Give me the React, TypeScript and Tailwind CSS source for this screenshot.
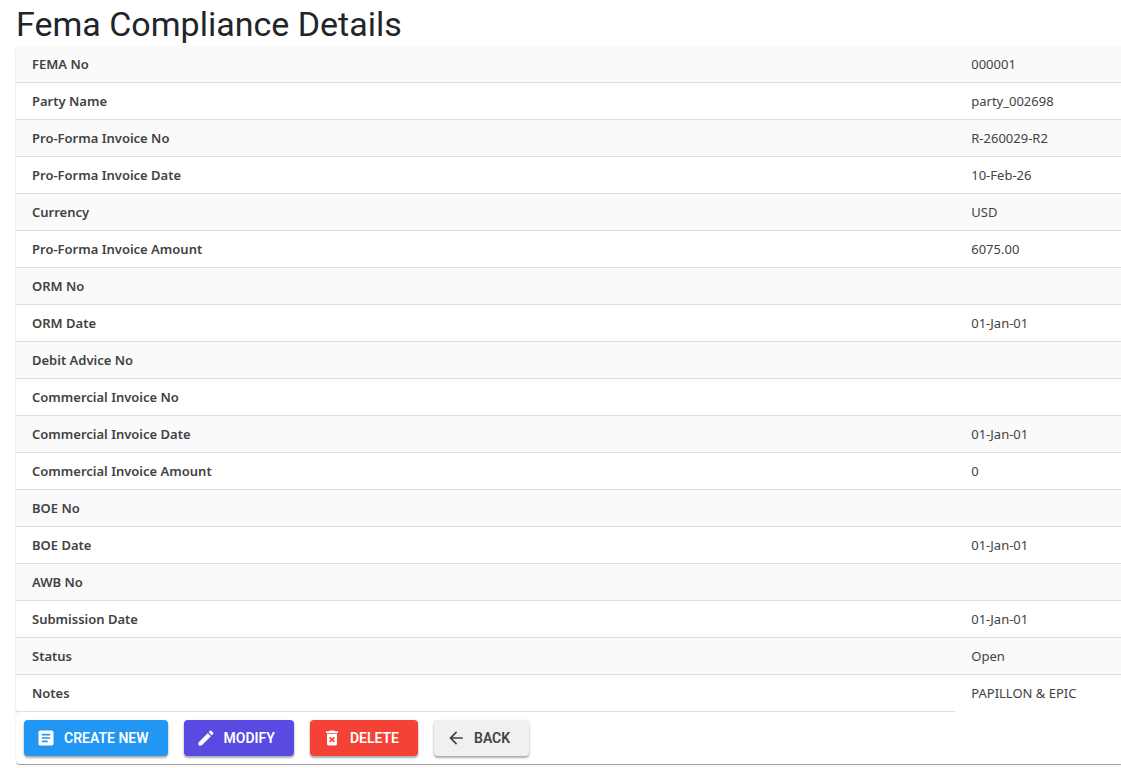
import { MdArrowBack, MdArticle, MdCreate, MdDeleteForever } from "react-icons/md";

const rows = [
  { label: "FEMA No", value: "000001" },
  { label: "Party Name", value: "party_002698" },
  { label: "Pro-Forma Invoice No", value: "R-260029-R2" },
  { label: "Pro-Forma Invoice Date", value: "10-Feb-26" },
  { label: "Currency", value: "USD" },
  { label: "Pro-Forma Invoice Amount", value: "6075.00" },
  { label: "ORM No", value: "" },
  { label: "ORM Date", value: "01-Jan-01" },
  { label: "Debit Advice No", value: "" },
  { label: "Commercial Invoice No", value: "" },
  { label: "Commercial Invoice Date", value: "01-Jan-01" },
  { label: "Commercial Invoice Amount", value: "0" },
  { label: "BOE No", value: "" },
  { label: "BOE Date", value: "01-Jan-01" },
  { label: "AWB No", value: "" },
  { label: "Submission Date", value: "01-Jan-01" },
  { label: "Status", value: "Open" },
  { label: "Notes", value: "PAPILLON & EPIC" },
];

const actions = [
  { label: "CREATE NEW", icon: MdArticle, color: "bg-[#2196f3] text-white" },
  { label: "MODIFY", icon: MdCreate, color: "bg-[#594ae2] text-white" },
  { label: "DELETE", icon: MdDeleteForever, color: "bg-[#f44336] text-white" },
  { label: "BACK", icon: MdArrowBack, color: "bg-[#f0f0f0] text-[#424242]" },
];

export default function App() {
  return (
    <main className="overflow-hidden bg-white pb-3 pl-4 font-['Noto_Sans',sans-serif] text-[#424242]">
      <h1 className="pt-1 pb-[2px] font-['Roboto',sans-serif] text-[34px] leading-10 text-[#212529]">
        Fema Compliance Details
      </h1>

      <div className="rounded-l shadow-[0_1px_2px_rgba(0,0,0,0.25)]">
        <table className="w-full table-fixed border-separate border-spacing-0 text-[13px] leading-5">
          <colgroup>
            <col className="w-[85%]" />
            <col />
          </colgroup>
          <tbody>
            {rows.map((row) => (
              <tr key={row.label} className="group odd:bg-[#fafafa]">
                <th
                  scope="row"
                  className="h-[37px] border-b border-[#e0e0e0] px-4 text-left font-semibold group-first:rounded-tl"
                >
                  {row.label}
                </th>
                <td className="border-b border-[#e0e0e0] px-4 whitespace-nowrap group-last:border-transparent">
                  {row.value}
                </td>
              </tr>
            ))}
          </tbody>
        </table>
      </div>

      {/* Toolbar */}
      <div className="flex gap-4 rounded-l bg-white p-2 shadow-[0_1px_1px_rgba(0,0,0,0.4)]">
        {actions.map(({ label, icon: Icon, color }) => (
          <button
            key={label}
            type="button"
            className={`flex h-9 items-center gap-2 rounded pr-[19px] pl-3 font-['Roboto',sans-serif] text-sm font-semibold shadow-[0_2px_2px_rgba(0,0,0,0.25),0_1px_3px_rgba(0,0,0,0.15)] ${color}`}
          >
            <Icon className="size-5" aria-hidden="true" />
            {label}
          </button>
        ))}
      </div>
    </main>
  );
}
